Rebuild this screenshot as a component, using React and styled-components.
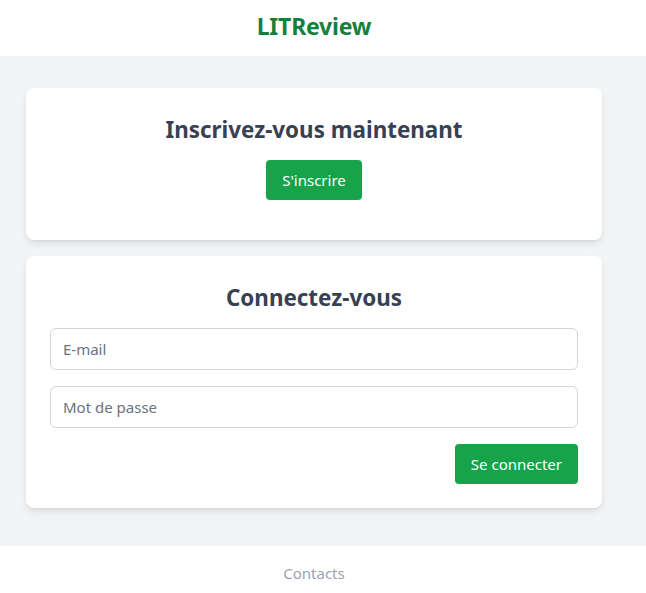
import styled, { createGlobalStyle } from "styled-components";

const Global = createGlobalStyle`
  html, body { margin: 0; padding: 0; }
  body {
    font-family: "Noto Sans", "Open Sans", sans-serif;
    background: #ffffff;
    color: #374151;
  }
  * { box-sizing: border-box; }
`;

const Page = styled.div`
  display: flex;
  flex-direction: column;
  min-height: 593px;
`;

const Header = styled.header`
  height: 56px;
  background: #ffffff;
  display: flex;
  align-items: center;
  justify-content: center;
  padding: 0 18px 5px 0;
`;

const Brand = styled.h1`
  margin: 0;
  font-size: 23px;
  font-weight: 700;
  color: #15803d;
  letter-spacing: -0.2px;
`;

const Main = styled.main`
  background: #f3f4f6;
  padding: 32px 44px 38px 26px;
  display: flex;
  flex-direction: column;
  gap: 16px;
`;

const Card = styled.section`
  background: #ffffff;
  border-radius: 8px;
  box-shadow: 0 4px 8px -1px rgba(0, 0, 0, 0.1), 0 2px 4px -2px rgba(0, 0, 0, 0.08);
  padding: ${(p) => (p.$loose ? "26px 24px 40px" : "26px 24px 24px")};
  display: flex;
  flex-direction: column;
  align-items: ${(p) => (p.$loose ? "center" : "stretch")};
`;

const Title = styled.h2`
  margin: 0 0 ${(p) => (p.$tight ? "14px" : "16px")};
  font-size: 22.4px;
  line-height: 32px;
  font-weight: 700;
  text-align: center;
  color: #374151;
`;

const Button = styled.button`
  height: 40px;
  padding: 0 16px;
  border: none;
  border-radius: 4px;
  background: #16a34a;
  color: #ffffff;
  font-family: inherit;
  font-size: 15px;
  cursor: pointer;
`;

const Form = styled.form`
  display: flex;
  flex-direction: column;
  gap: 16px;
`;

const Input = styled.input`
  height: 42px;
  width: 100%;
  padding: 0 12px;
  border: 1px solid #d1d5db;
  border-radius: 6px;
  font-family: inherit;
  font-size: 15px;
  color: #374151;
  &::placeholder { color: #6b7280; }
`;

const Actions = styled.div`
  display: flex;
  justify-content: flex-end;
`;

const Footer = styled.footer`
  flex: 1;
  background: #ffffff;
  display: flex;
  justify-content: center;
  padding: 17px 18px 0 0;
  font-size: 15px;
  color: #9ca3af;
`;

export default function App() {
  return (
    <Page>
      <Global />
      <Header>
        <Brand>LITReview</Brand>
      </Header>
      <Main>
        <Card $loose>
          <Title $tight>Inscrivez-vous maintenant</Title>
          <Button type="button">S'inscrire</Button>
        </Card>
        <Card>
          <Title $tight>Connectez-vous</Title>
          <Form onSubmit={(e) => e.preventDefault()}>
            <Input type="email" placeholder="E-mail" />
            <Input type="password" placeholder="Mot de passe" />
            <Actions>
              <Button type="submit">Se connecter</Button>
            </Actions>
          </Form>
        </Card>
      </Main>
      <Footer>Contacts</Footer>
    </Page>
  );
}
